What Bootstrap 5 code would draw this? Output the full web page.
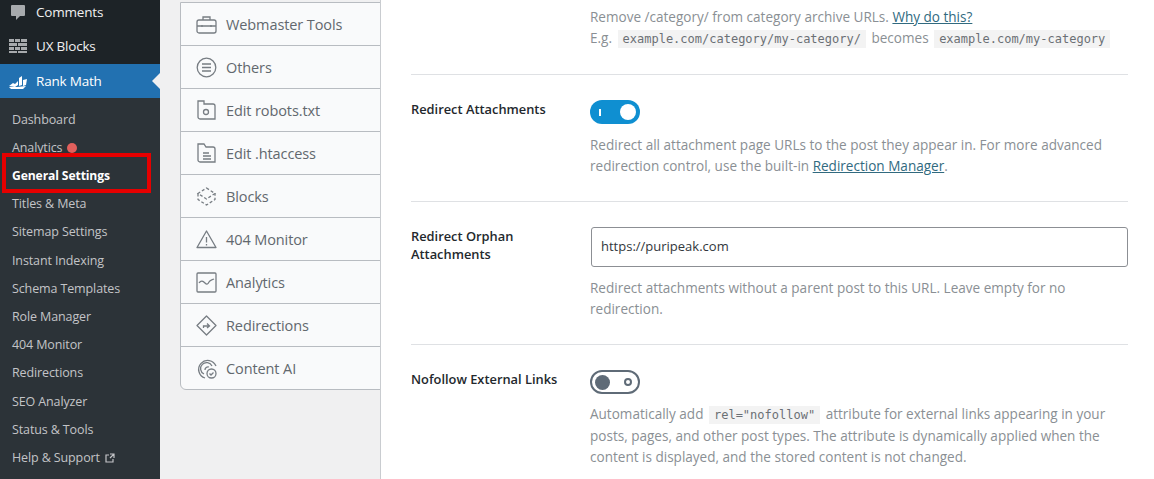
<!DOCTYPE html>
<html lang="en"><head><meta charset="utf-8"><title>Rank Math General Settings</title>
<link href="https://cdn.jsdelivr.net/npm/bootstrap@5.3.0/dist/css/bootstrap.min.css" rel="stylesheet">
<style>
html,body{height:479px;overflow:hidden}
body{font-family:"Open Sans","Noto Sans",sans-serif;background:#f0f0f1;font-size:14px}
.shell{height:479px;overflow:hidden}
.wpside{width:160px;background:#1d2327;flex:none;font-size:13.5px;letter-spacing:-.2px}
.topitem{height:34px;color:#f0f0f1;padding-left:8px;gap:8px}
.topitem svg{flex:none;width:20px;height:20px}
.topitem.first{margin-top:-5px}
.topitem.cur{margin-top:1px;background:#2271b1;color:#fff;position:relative}
.topitem.cur::after{content:"";position:absolute;right:0;top:9px;border:8px solid transparent;border-right-color:#f0f0f1;border-left:0}
.submenu{background:#2c3338;flex:1;padding-top:8px}
.subitem{height:28.2px;padding-left:12px;color:#c3c4c7;font-size:12.5px;letter-spacing:-.12px;gap:5px}
.subitem.on{color:#fff;font-weight:700;position:relative;font-size:12.15px}
.subitem.on::after{content:"";position:absolute;left:2px;top:-9px;width:149px;height:40px;border:4px solid #e60000}
.reddot{width:10px;height:10px;border-radius:50%;background:#e2605c}
.tabs{width:201px;margin-left:20px;flex:none;align-self:flex-start;margin-top:2px;background:#f9fafb;border:1px solid #b8bcc1;border-radius:0 0 0 6px}
.tabrow{height:43px;padding:1px 0 0 15px;gap:9px;color:#62686e;font-size:14.5px;letter-spacing:-.1px;border-bottom:1px solid #b8bcc1}
.tabrow:last-child{border-bottom:0;height:42px}
.tabrow svg{width:21px;height:21px;flex:none;fill:none;stroke:#777d83;stroke-width:1.3}
.mainpane{flex:1;background:#fff;padding:0 27px 0 30px;border-left:1px solid #c9ccd0;margin-left:-1px;color:#8a8f94;font-size:13.55px;line-height:21px}
.setrow{border-bottom:1px solid #dfe1e4}
.lbl{width:179px;flex:none;color:#23282d;font-weight:600;font-size:12.85px;line-height:18px}
.desc{margin:0}
.desc a{color:#316a7f}
.kode{font-family:"DejaVu Sans Mono","Liberation Mono",monospace;font-size:12px;background:#f3f3f3;color:#6b7075;padding:2px 5px;margin:0 2px}
.sw{width:50px;height:24px;border-radius:12px;display:flex;align-items:center;justify-content:space-between}
.sw.onn{background:#0f8fd1;padding:0 4px 0 9px}
.sw.onn i{display:block;width:2px;height:7px;background:#fff}
.sw.onn b{display:block;width:16px;height:16px;border-radius:50%;background:#fff}
.sw.off{border:2px solid #5f6b77;padding:0 6px 0 3px}
.sw.off b{display:block;width:15px;height:15px;border-radius:50%;background:#5f6b77}
.sw.off i{display:block;width:8px;height:8px;border-radius:50%;border:2px solid #5f6b77}
.urlbox{height:40px;width:537px;margin-left:1px;border:1px solid #8c8f94;border-radius:3px;color:#32373c;font-size:13px;padding:0 9px 1px;display:flex;align-items:center;background:#fff}
</style></head><body>
<div class="shell d-flex">
<nav class="wpside d-flex flex-column">
 <div class="topitem first d-flex align-items-center"><svg viewBox="0 0 20 20"><path fill="#a7aaad" d="M4 3h12a1 1 0 0 1 1 1v9a1 1 0 0 1-1 1h-4l-4 4v-4H4a1 1 0 0 1-1-1V4a1 1 0 0 1 1-1z"/></svg><span>Comments</span></div>
 <div class="topitem d-flex align-items-center"><svg viewBox="0 0 20 20"><path fill="#a7aaad" d="M1 3h5v3H1zM7 3h5v3H7zM13 3h6v3h-6zM1 7h8v3H1zM10 7h9v3h-9zM1 11h5v3H1zM7 11h5v3H7zM13 11h6v3h-6zM1 15h8v2H1zM10 15h9v2h-9z"/></svg><span>UX Blocks</span></div>
 <div class="topitem cur d-flex align-items-center"><svg viewBox="0 0 20 20"><path fill="#fff" d="M1 15l4-3 2 1 3-3v4l-3 2zM11 7l3-2v9l-3 1zM15 9l4-1-1 6-3 1zM1 16h8l9-1-3 3H3z"/></svg><span>Rank Math</span></div>
 <div class="submenu">
  <div class="subitem d-flex align-items-center">Dashboard</div>
  <div class="subitem d-flex align-items-center">Analytics <span class="reddot"></span></div>
  <div class="subitem on d-flex align-items-center">General Settings</div>
  <div class="subitem d-flex align-items-center">Titles &amp; Meta</div>
  <div class="subitem d-flex align-items-center">Sitemap Settings</div>
  <div class="subitem d-flex align-items-center">Instant Indexing</div>
  <div class="subitem d-flex align-items-center">Schema Templates</div>
  <div class="subitem d-flex align-items-center">Role Manager</div>
  <div class="subitem d-flex align-items-center">404 Monitor</div>
  <div class="subitem d-flex align-items-center">Redirections</div>
  <div class="subitem d-flex align-items-center">SEO Analyzer</div>
  <div class="subitem d-flex align-items-center">Status &amp; Tools</div>
  <div class="subitem d-flex align-items-center">Help &amp; Support <svg width="10" height="10" viewBox="0 0 10 10" fill="none" stroke="#c3c4c7" stroke-width="1.2"><path d="M4 2H1v7h7V6M5 1h4v4M9 1L5 5"/></svg></div>
 </div>
</nav>
<div class="tabs">
 <div class="tabrow d-flex align-items-center"><svg viewBox="0 0 21 21"><rect x="1" y="6" width="19" height="13" rx="2"/><path d="M7 6V3h7v3M1 12h19M6 11v2M15 11v2"/></svg>Webmaster Tools</div>
 <div class="tabrow d-flex align-items-center"><svg viewBox="0 0 21 21"><circle cx="10.5" cy="10.5" r="9.3"/><path d="M6 7h9M6 10.5h9M6 14h9"/></svg>Others</div>
 <div class="tabrow d-flex align-items-center"><svg viewBox="0 0 21 21"><path d="M2 1h6v3h9a2 2 0 0 1 2 2v13H4a2 2 0 0 1-2-2z"/><circle cx="10" cy="12" r="2.500"/></svg>Edit robots.txt</div>
 <div class="tabrow d-flex align-items-center"><svg viewBox="0 0 21 21"><path d="M2 1h6l2 3h7a2 2 0 0 1 2 2v13H4a2 2 0 0 1-2-2z"/><path d="M7 10h6M7 13h8M7 16h8"/></svg>Edit .htaccess</div>
 <div class="tabrow d-flex align-items-center"><svg viewBox="0 0 21 21" stroke-dasharray="3 2"><path d="M10.500 2l8.500 5.500-8.500 5.500L2 7.500z"/><path d="M2 7.500v6l8.500 5.500 8.500-5.500v-6"/></svg>Blocks</div>
 <div class="tabrow d-flex align-items-center"><svg viewBox="0 0 21 21"><path d="M10.500 2L20 18.500H1z" stroke-linejoin="round"/><path d="M10.500 8v5.500M10.500 15v1.500"/></svg>404 Monitor</div>
 <div class="tabrow d-flex align-items-center"><svg viewBox="0 0 21 21"><rect x="1" y="1" width="19" height="19" rx="1"/><path d="M3 11c2-3 4-2 6 0s3 1 4-1 3-2 5-3"/></svg>Analytics</div>
 <div class="tabrow d-flex align-items-center"><svg viewBox="0 0 21 21"><path d="M10.500 1l9.500 9.500-9.500 9.500L1 10.500z" stroke-linejoin="round"/><path d="M7.500 13v-2h5M11 8.500l2.500 2.500L11 13"/></svg>Redirections</div>
 <div class="tabrow d-flex align-items-center"><svg viewBox="0 0 21 21"><path d="M9 20A9 9 0 1 1 20 8M8 16a6 6 0 1 1 8-8M9 12a3 3 0 0 1 4-3"/><circle cx="15.500" cy="15.500" r="4.500"/><path d="M13.500 15.500l1.500 1.500 2.500-2.500"/></svg>Content AI</div>
</div>
<main class="mainpane">
 <div class="setrow d-flex" style="height:75px;padding-top:7px">
  <div class="lbl"></div>
  <div class="desc">Remove /category/ from category archive URLs. <a href="#">Why do this?</a><br>E.g. <code class="kode">example.com/category/my-category/</code> becomes <code class="kode">example.com/my-category</code></div>
 </div>
 <div class="setrow d-flex" style="height:127px;padding-top:25px">
  <div class="lbl">Redirect Attachments</div>
  <div><div class="sw onn"><i></i><b></b></div><p class="desc" style="margin-top:11px">Redirect all attachment page URLs to the post they appear in. For more advanced redirection control, use the built-in <a href="#">Redirection Manager</a>.</p></div>
 </div>
 <div class="setrow d-flex" style="height:143px;padding-top:25px">
  <div class="lbl">Redirect Orphan Attachments</div>
  <div><div class="urlbox">https://puripeak.com</div><p class="desc" style="margin-top:11px">Redirect attachments without a parent post to this URL. Leave empty for no redirection.</p></div>
 </div>
 <div class="d-flex" style="padding-top:25px">
  <div class="lbl">Nofollow External Links</div>
  <div><div class="sw off"><b></b><i></i></div><p class="desc" style="margin-top:10px">Automatically add <code class="kode">rel="nofollow"</code> attribute for external links appearing in your posts, pages, and other post types. The attribute is dynamically applied when the content is displayed, and the stored content is not changed.</p></div>
 </div>
</main>
</div>
</body></html>
